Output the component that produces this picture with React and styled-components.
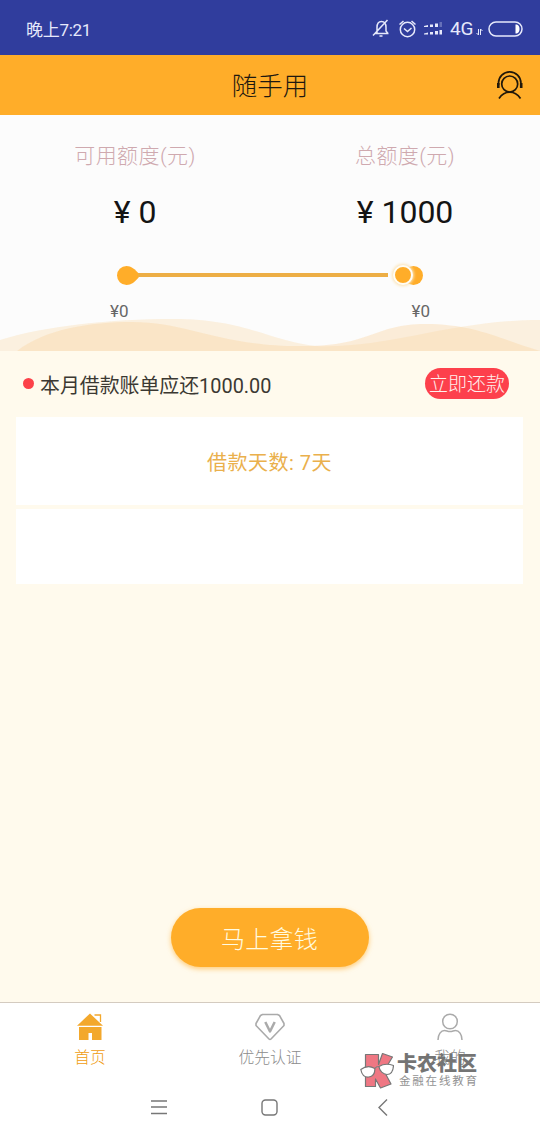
import React from 'react';
import styled, { createGlobalStyle } from 'styled-components';

const Global = createGlobalStyle`
  * { box-sizing: border-box; }
  body { margin: 0; background: #fff; }
  svg { display: block; flex: none; }
`;

const Screen = styled.div`
  position: relative;
  display: flex;
  flex-direction: column;
  width: 540px;
  height: 1140px;
  overflow: hidden;
  background: #fffaed;
  font-family: Roboto, 'Noto Sans CJK SC', sans-serif;
  white-space: nowrap;
`;

const StatusBar = styled.div`
  display: flex;
  align-items: center;
  justify-content: space-between;
  height: 55px;
  padding: 3px 17px 0 26px;
  background: #303d9d;
  color: #e6e9fb;
  font-size: 17px;
  letter-spacing: -0.3px;
`;

const Clock = styled.span`
  padding-bottom: 1px;
`;

const StatusIcons = styled.div`
  display: flex;
  align-items: center;
`;

const Network = styled.span`
  width: 26px;
  margin-left: 6px;
  font-size: 19px;
  line-height: 20px;
`;

const Header = styled.header`
  display: grid;
  grid-template-columns: 1fr auto 1fr;
  align-items: center;
  height: 60px;
  padding: 0 16px;
  background: #ffad29;
`;

const Title = styled.h1`
  grid-column: 2;
  margin: 0;
  padding-top: 2px;
  font-size: 25.5px;
  font-weight: 300;
  line-height: 36px;
  color: #1d1810;
`;

const Support = styled.div`
  justify-self: end;
`;

const Hero = styled.section`
  display: flex;
  flex-direction: column;
  height: 236px;
  background: #fcfcfc;
`;

const Quotas = styled.div`
  display: flex;
  padding-top: 25px;
`;

const Quota = styled.div`
  flex: 1;
  display: flex;
  flex-direction: column;
  align-items: center;
`;

const QuotaLabel = styled.span`
  height: 32px;
  line-height: 32px;
  font-size: 21px;
  font-weight: 300;
  letter-spacing: 0.4px;
  color: #cfa9af;
`;

const Amount = styled.span`
  height: 40px;
  margin-top: 20px;
  font-size: 32px;
  line-height: 40px;
  color: #141414;
`;

const Slider = styled.div`
  display: flex;
  align-items: center;
  height: 24px;
  margin: 31px 0 0 117px;
`;

const Track = styled.div`
  width: 250px;
  height: 4px;
  margin-left: -1px;
  background: #edae45;
`;

const Thumb = styled.div`
  position: relative;
  z-index: 1;
  width: 20px;
  height: 20px;
  margin-left: 5px;
  border: 2.5px solid #fffdf6;
  border-radius: 50%;
  background: #ffad29;
  box-shadow: 0 0 3px 1px #fbe3b5;
`;

const EndStop = styled.div`
  width: 19px;
  height: 19px;
  margin-left: -9px;
  border-radius: 50%;
  background: #ffad29;
`;

const Range = styled.div`
  display: flex;
  justify-content: space-between;
  padding: 13px 110px 0 110px;
  font-size: 17px;
  line-height: 22px;
  color: #676767;
`;

const WaveArt = styled.svg`
  margin-top: -3px;
`;

const Content = styled.main`
  flex: 1;
  display: flex;
  flex-direction: column;
  padding: 0 17px 0 16px;
`;

const BillRow = styled.div`
  display: flex;
  align-items: center;
  height: 66px;
  padding: 0 14px 1px 7px;
`;

const Dot = styled.i`
  width: 11px;
  height: 11px;
  border-radius: 50%;
  background: #fc4149;
`;

const BillText = styled.span`
  flex: 1;
  margin-left: 6px;
  padding-top: 1px;
  font-size: 19.9px;
  color: #3b3832;
`;

const RepayButton = styled.button`
  width: 84px;
  height: 31px;
  padding: 2px 0 0;
  border: 0;
  border-radius: 16px;
  background: #fd404c;
  color: #fff0ed;
  font: inherit;
  font-size: 19px;
  font-weight: 300;
  line-height: 29px;
`;

const Card = styled.div`
  display: flex;
  align-items: center;
  justify-content: center;
  height: ${(p) => p.$height}px;
  margin-bottom: 4px;
  background: #fff;
  color: #eab04c;
  font-size: 20px;
  letter-spacing: 0.5px;
`;

const BorrowButton = styled.button`
  align-self: center;
  width: 198px;
  height: 59px;
  margin: auto 0 35px;
  padding: 0;
  border: 0;
  border-radius: 30px;
  background: #ffad29;
  box-shadow: 0 2px 5px rgba(255, 173, 41, 0.6);
  color: #fffbe0;
  font: inherit;
  font-size: 24px;
  font-weight: 300;
  letter-spacing: 0.3px;
`;

const TabBar = styled.nav`
  display: flex;
  height: 73px;
  border-top: 1px solid #d4cbc0;
  background: #fff;
`;

const Tab = styled.div`
  flex: 1;
  display: flex;
  flex-direction: column;
  align-items: center;
  padding: 10px 1px 0 0;
  color: ${(p) => (p.$active ? '#f09c10' : '#8c8c8c')};
`;

const TabLabel = styled.span`
  margin: 5px 0 0 1px;
  font-size: 15.8px;
  font-weight: 300;
  line-height: 24px;
`;

const SystemNav = styled.div`
  display: grid;
  grid-template-columns: 16px 17px 10px;
  column-gap: 94px;
  align-items: center;
  height: 65px;
  padding: 0 0 1px 151px;
  background: #fff;
`;

const BackIcon = styled.svg`
  margin-left: 6px;
`;

const Watermark = styled.div`
  position: absolute;
  left: 360px;
  top: 1051px;
  display: flex;
`;

const WatermarkText = styled.div`
  display: flex;
  flex-direction: column;
  margin-left: 3px;
`;

const Brand = styled.span`
  height: 24px;
  font-size: 20px;
  font-weight: 900;
  line-height: 27px;
  color: #747474;
`;

const Slogan = styled.span`
  margin-left: 2px;
  font-size: 11.5px;
  line-height: 13px;
  letter-spacing: 1.8px;
  color: #929292;
`;

const StatusGlyphs = () => (
  <svg width="72" height="24" viewBox="372 17 72 24" fill="none" stroke="#e6e9fb" strokeWidth="1.5">
    <path d="M375 33.500h13.500M377 33v-5.500c0-4 2-6 4.500-6s4.500 2 4.500 6v3.500l2 2.500M373 35.500L387.500 20M379.500 36h3" />
    <circle cx="407.500" cy="29.500" r="7.200" />
    <path d="M404 28.500l3.500 3 4-3.500M399.500 24.500l4-3.500M411.500 21l4 3.500" />
    <g fill="#e6e9fb" stroke="none">
      <path d="M424 26l4-1v2h-4zM430 24.500h3v2.500h-3zM435 23.500h3v3.500h-3z" />
      <path d="M439.500 22h2.500v5h-2.500z" opacity=".3" />
      <path d="M424 33.500l4-1v2h-4zM430 32h3v2.500h-3zM435 31h3v3.500h-3zM439.500 30h2.500v4.500h-2.500z" />
    </g>
  </svg>
);

const DataArrows = () => (
  <svg width="12" height="24" viewBox="0 0 12 24" fill="none" stroke="#e6e9fb" strokeWidth="1">
    <path d="M2.500 12v6l-2-2M4.500 18v-6l2 2" />
  </svg>
);

const Battery = () => (
  <svg width="35" height="16" viewBox="0 0 35 16">
    <rect x="1" y="1" width="33" height="14" rx="7" fill="none" stroke="#e6e9fb" strokeWidth="1.5" />
    <path d="M27.500 3.500c3 0 4 2 4 4.500s-1 4.500-4 4.500z" fill="#fff" />
  </svg>
);

const HeadsetIcon = () => (
  <svg width="28" height="30" viewBox="0 0 28 30" fill="none" stroke="#21180a">
    <circle cx="13.700" cy="14" r="8" strokeWidth="1.700" />
    <path d="M2.500 15v-2a11.200 11.200 0 0 1 22.400 0v2" strokeWidth="1.700" />
    <path d="M2.300 13v5M25.200 13v5" strokeWidth="2.600" />
    <path d="M3 28.500c3-4.500 6.500-6.300 10.700-6.300s7.700 1.800 10.800 6.300" strokeWidth="1.700" />
  </svg>
);

const HomeIcon = () => (
  <svg width="28" height="28" viewBox="0 0 28 28" fill="#f3a82c">
    <path d="M14 .5L27 12.700H1z" />
    <path d="M3 14h22.500v13h-9.500v-7h-3.500v7H3z" />
    <path d="M18.500 2h6v7" fill="none" stroke="#f3a82c" strokeWidth="1.300" />
  </svg>
);

const DiamondIcon = () => (
  <svg width="30" height="28" viewBox="0 0 30 28" fill="none" stroke="#aaa" strokeLinejoin="round">
    <path d="M7.500 1.500h15l2 1L29 10.500v2L16 26q-1 1-2 0L1 12.500v-2l4.500-8z" strokeWidth="1.600" />
    <path d="M10.300 9l4.700 9.500L19.700 9" strokeWidth="2.500" />
  </svg>
);

const ProfileIcon = () => (
  <svg width="28" height="28" viewBox="0 0 28 28" fill="none" stroke="#aaa" strokeWidth="1.500">
    <circle cx="14" cy="8.500" r="7.300" />
    <path d="M2 27c0-5.500 3-9.500 6.500-9.500 2 0 3 1 5.500 1s3.500-1 5.500-1c3.500 0 6.500 4 6.500 9.500" />
  </svg>
);

const BrandMark = () => (
  <svg width="34" height="38" viewBox="0 0 34 38" stroke="#777" strokeWidth="1.200" strokeLinejoin="round">
    <path d="M5.500 3.500h13v10l4-11 10 3.500-8.500 14 7 13-10.500 4-5-9v7.500H5.500z" fill="#ef7783" />
    <path d="M.8 18.500c4-3 9.500-3.500 14-1 .3 5-2 8-6 8.500s-7-2.500-8-7.500zM19 15.500c4-2.500 9.500-2.800 14.500-1-.3 5.500-2.500 9-6.500 9s-7.500-3.500-8-8zM14.800 17.500q1.500-2 4.200-2" fill="#fff" />
  </svg>
);

const Waves = () => (
  <WaveArt width="540" height="32" viewBox="0 0 540 32">
    <path d="M0 21C45 7 110 0 174 0 245 0 270 22 315 27 390 30 450 1 540 1V32H0z" fill="#f8d9a8" fillOpacity=".34" />
    <path d="M17 32C45 10 90 3 132 3 190 3 220 28 305 27 370 27 375 5 425 5 475 5 500 20 540 32z" fill="#fad5a2" fillOpacity=".4" />
  </WaveArt>
);

const quotas = [
  { label: '可用额度(元)', amount: '¥ 0' },
  { label: '总额度(元)', amount: '¥ 1000' },
];

const tabs = [
  { label: '首页', Icon: HomeIcon, active: true },
  { label: '优先认证', Icon: DiamondIcon },
  { label: '我的', Icon: ProfileIcon },
];

export default function App() {
  return (
    <Screen>
      <Global />
      <StatusBar>
        <Clock>晚上7:21</Clock>
        <StatusIcons>
          <StatusGlyphs />
          <Network>4G</Network>
          <DataArrows />
          <Battery />
        </StatusIcons>
      </StatusBar>
      <Header>
        <Title>随手用</Title>
        <Support><HeadsetIcon /></Support>
      </Header>
      <Hero>
        <Quotas>
          {quotas.map((q) => (
            <Quota key={q.label}>
              <QuotaLabel>{q.label}</QuotaLabel>
              <Amount>{q.amount}</Amount>
            </Quota>
          ))}
        </Quotas>
        <Slider>
          <svg width="22" height="19" viewBox="0 0 22 19" fill="#ffad29">
            <path d="M9.500 0C14 0 18 3 22 8v3C18 16 14 19 9.500 19a9.500 9.500 0 0 1 0-19z" />
          </svg>
          <Track />
          <Thumb />
          <EndStop />
        </Slider>
        <Range><span>¥0</span><span>¥0</span></Range>
        <Waves />
      </Hero>
      <Content>
        <BillRow>
          <Dot />
          <BillText>本月借款账单应还1000.00</BillText>
          <RepayButton>立即还款</RepayButton>
        </BillRow>
        <Card $height={88}>借款天数: 7天</Card>
        <Card $height={75} />
        <BorrowButton>马上拿钱</BorrowButton>
      </Content>
      <TabBar>
        {tabs.map(({ label, Icon, active }) => (
          <Tab key={label} $active={active}>
            <Icon />
            <TabLabel>{label}</TabLabel>
          </Tab>
        ))}
      </TabBar>
      <SystemNav>
        <svg width="16" height="16" viewBox="0 0 16 16" stroke="#777" strokeWidth="1.300"><path d="M0 2h16M0 8h16M0 14.500h16" /></svg>
        <svg width="17" height="17" viewBox="0 0 17 17" fill="none" stroke="#777" strokeWidth="1.400"><rect x="1" y="1" width="15" height="15" rx="3.500" /></svg>
        <BackIcon width="10" height="17" viewBox="0 0 10 17" fill="none" stroke="#777" strokeWidth="1.400"><path d="M9 .5l-8 8 8 8" /></BackIcon>
      </SystemNav>
      <Watermark>
        <BrandMark />
        <WatermarkText>
          <Brand>卡农社区</Brand>
          <Slogan>金融在线教育</Slogan>
        </WatermarkText>
      </Watermark>
    </Screen>
  );
}
